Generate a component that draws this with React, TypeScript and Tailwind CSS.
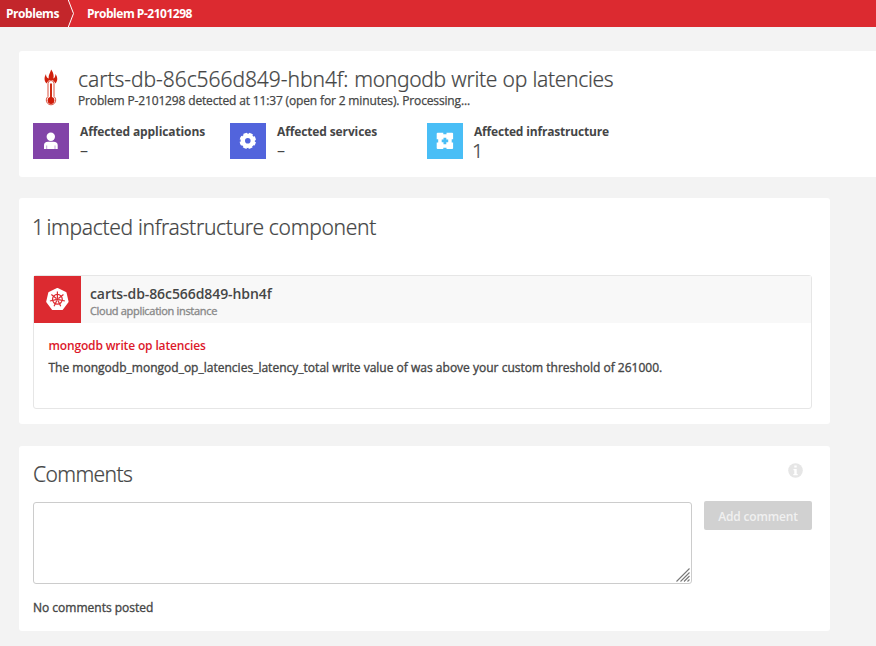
import type { ReactNode } from "react";

function Thermometer() {
  return (
    <svg width="14" height="38" viewBox="0 0 14 38" fill="none">
      <path d="M2.500 14.500C-0.300 11.500 0.300 8 2 5C2 7.500 3 9 4.800 9.500C4 6 6.300 4 7.200 0.500C8.800 3 10.300 5.500 9.300 9.500C10.800 9 11.300 7.500 11.500 5C13.700 8.500 14 11.500 11.500 14.500L10.300 12.800C9.500 11.300 8.500 11 7 11C5.500 11 4.500 11.300 3.700 12.800Z" fill="#d0200c" />
      <path d="M4 27.500V14.500A3 3 0 0 1 10 14.500V27.500A4.700 4.700 0 1 1 4 27.500Z" stroke="#d9503e" strokeWidth="1" fill="#fff" />
      <path d="M7 14.500V30" stroke="#cf2a12" strokeWidth="2" />
      <circle cx="7" cy="31.500" r="3.400" fill="#cf1b08" />
    </svg>
  );
}

function PersonIcon() {
  return (
    <svg width="36" height="36" viewBox="0 0 36 36" fill="#fff">
      <circle cx="17.800" cy="13.800" r="4.200" />
      <path d="M11 26V22.500Q11 18.800 15 18.800H20.500Q24.700 18.800 24.700 22.500V26Z" />
      <path d="M13.700 22.500V26M22 22.500V26" stroke="#8244a8" strokeWidth="0.500" />
    </svg>
  );
}

function GearIcon() {
  return (
    <svg width="36" height="36" viewBox="0 0 36 36">
      <circle cx="17.800" cy="17.800" r="5" fill="none" stroke="#fff" strokeWidth="4.400" />
      <circle cx="17.800" cy="17.800" r="7.300" fill="none" stroke="#fff" strokeWidth="1.800" strokeDasharray="3.800 1.934" transform="rotate(8 17.800 17.800)" />
    </svg>
  );
}

function PuzzleIcon() {
  return (
    <svg width="36" height="36" viewBox="0 0 36 36">
      <rect x="9.700" y="9.700" width="16.400" height="16.400" rx="1" fill="#fff" />
      <g fill="#49bef6">
        <path d="M16.300 9H19.500V11.200H16.300ZM16.300 24.700H19.500V27H16.300ZM9 16.300H11.200V19.500H9ZM24.700 16.300H27V19.500H24.700Z" />
        <path d="M16.500 14.700H19.300V16.500H21.200V19.300H19.300V21.200H16.500V19.300H14.700V16.500H16.500Z" />
      </g>
    </svg>
  );
}

const spokes = [0, 51.43, 102.86, 154.29, 205.71, 257.14, 308.57];

function KubernetesIcon() {
  return (
    <svg width="47" height="47" viewBox="0 0 47 47">
      <path d="M23.400 12.800L31.600 16.700L33.700 25.700L28.100 33.100H18.700L13.100 25.700L15.200 16.700Z" fill="#fff" stroke="#fff" strokeWidth="1.800" strokeLinejoin="round" />
      <g fill="none" stroke="#dc2a30" strokeWidth="1.200">
        <circle cx="23.400" cy="23.300" r="4.900" />
        {spokes.map((a) => (
          <path key={a} d="M23.400 22V15.600" transform={`rotate(${a} 23.400 23.300)`} />
        ))}
      </g>
      <circle cx="23.400" cy="23.300" r="1.300" fill="#dc2a30" />
    </svg>
  );
}

function Stat({ color, icon, label, value }: { color: string; icon: ReactNode; label: ReactNode; value: ReactNode }) {
  return (
    <div className="flex w-[197px] gap-[11px]">
      <div className={`h-9 w-9 shrink-0 ${color}`}>{icon}</div>
      <div className="whitespace-nowrap">
        <div className="text-[12px] leading-[18px] font-bold">{label}</div>
        {value}
      </div>
    </div>
  );
}

export default function App() {
  return (
    <div className="h-[646px] w-[876px] overflow-hidden bg-[#f3f3f3] font-['Open_Sans','Noto_Sans',sans-serif] text-[#454646]">
      <nav className="flex h-[27px] bg-[#dc2a30] text-[12px] leading-[27px] font-bold whitespace-nowrap text-white">
        <div className="flex">
          <div className="w-[68px] bg-[#c3262b] pl-[6px] tracking-[-0.45px]">Problems</div>
          <svg width="7" height="27" viewBox="0 0 7 27">
            <path d="M0 0L5.500 13.500L0 27Z" fill="#c3262b" />
            <path d="M0.300 0L5.500 13.500L0.300 27" fill="none" stroke="#fff" strokeWidth="1" />
          </svg>
        </div>
        <div className="pl-3 tracking-[-0.48px]">Problem P-2101298</div>
      </nav>

      <header className="mt-6 ml-[19px] h-[126px] rounded-l-[3px] bg-white pl-[14px]">
        <div className="flex h-[72px] whitespace-nowrap">
          <div className="w-[45px] pt-[18px] pl-[11px]"><Thermometer /></div>
          <div className="pt-[14px]">
            <h1 className="font-['Noto_Sans',sans-serif] text-[21px] leading-7 font-light tracking-[-0.34px] [word-spacing:0.5px] [-webkit-text-stroke:0.2px]">
              <span className="tracking-[-0.05px]">carts-db-86c566d849-hbn4f: </span>mongodb write op latencies
            </h1>
            <p className="text-[12px] leading-4 tracking-[-0.15px] [-webkit-text-stroke:0.25px]">Problem P-2101298 detected at 11:37 (open for 2 minutes). Processing...</p>
          </div>
        </div>
        <div className="flex">
          <Stat color="bg-[#8244a8]" icon={<PersonIcon />} label={<span className="tracking-[-0.1px]">Affected applications</span>} value={<div className="text-[16px] leading-[18px]">–</div>} />
          <Stat color="bg-[#5264dc]" icon={<GearIcon />} label={<span className="tracking-[-0.12px]">Affected services</span>} value={<div className="text-[16px] leading-[18px]">–</div>} />
          <Stat color="bg-[#49bef6]" icon={<PuzzleIcon />} label={<span className="tracking-[-0.18px]">Affected infrastructure</span>} value={<div className="-ml-0.5 font-['Noto_Sans',sans-serif] text-[20px] leading-5 font-light [-webkit-text-stroke:0.2px]">1</div>} />
        </div>
      </header>

      <section className="mt-[21px] ml-[19px] h-[226px] w-[811px] rounded-[3px] bg-white px-[14px] pt-[14px]">
        <h2 className="-ml-px font-['Noto_Sans',sans-serif] text-[21px] leading-[30px] font-light tracking-[-0.3px] [-webkit-text-stroke:0.2px]">
          <span className="tracking-[-1.500px]">1 </span>impacted infrastructure component
        </h2>
        <div className="mt-[33px] h-[134px] w-[779px] rounded-[3px] border border-[#e6e6e6]">
          <div className="flex h-[47px] bg-[#f8f8f8]">
            <div className="w-[47px] bg-[#dc2a30]"><KubernetesIcon /></div>
            <div className="pt-2 pl-[9px]">
              <div className="text-[14px] leading-5 font-semibold tracking-[-0.08px]">carts-db-86c566d849-hbn4f</div>
              <div className="text-[11px] leading-[13px] tracking-[-0.31px] text-[#898989] [-webkit-text-stroke:0.35px]">Cloud application instance</div>
            </div>
          </div>
          <div className="pt-[13px] pl-[14.500px] text-[12px]">
            <div className="leading-5 font-semibold tracking-[-0.15px] text-[#dc172a]">mongodb write op latencies</div>
            <div className="mt-0.5 leading-5 tracking-[0.01px] [-webkit-text-stroke:0.35px]">The mongodb_mongod_op_latencies_latency_total write value of was above your custom threshold of 261000.</div>
          </div>
        </div>
      </section>

      <section className="mt-[22px] ml-[19px] h-[185px] w-[811px] rounded-[3px] bg-white pt-3 pr-[18px] pl-[14px]">
        <div className="flex h-[43px] justify-between">
          <h2 className="pt-px font-['Noto_Sans',sans-serif] text-[21px] leading-[30px] font-light tracking-[-0.62px] [-webkit-text-stroke:0.2px]">Comments</h2>
          <svg className="mt-[5px] mr-[9px]" width="15" height="15" viewBox="0 0 15 15">
            <circle cx="7.500" cy="7.500" r="7.300" fill="#e6e6e6" />
            <path d="M6.300 2.500H8.700V4.500H6.300ZM5.500 6H8.700V11H9.700V12.200H5.300V11H6.300V7.200H5.500Z" fill="#fff" />
          </svg>
        </div>
        <div className="flex items-start justify-between">
          <div className="mt-px flex h-[82px] w-[659px] items-end justify-end rounded-[3px] border border-[#cccccc] p-px">
            <svg width="14" height="14" viewBox="0 0 14 14" stroke="#777" strokeWidth="1.100">
              <path d="M0.500 13.500L13.500 0.500M4.500 13.500L13.500 4.500M8 13.500L13.500 8M11.500 13.500L13.500 11.500" />
            </svg>
          </div>
          <button className="h-[29px] w-[108px] rounded-[2px] bg-[#d1d1d1] pt-0.5 text-[12px] font-semibold tracking-[-0.18px] text-[#f0f0f0]">Add comment</button>
        </div>
        <p className="mt-[14px] text-[12px] leading-5 [-webkit-text-stroke:0.35px]">No comments posted</p>
      </section>
    </div>
  );
}
